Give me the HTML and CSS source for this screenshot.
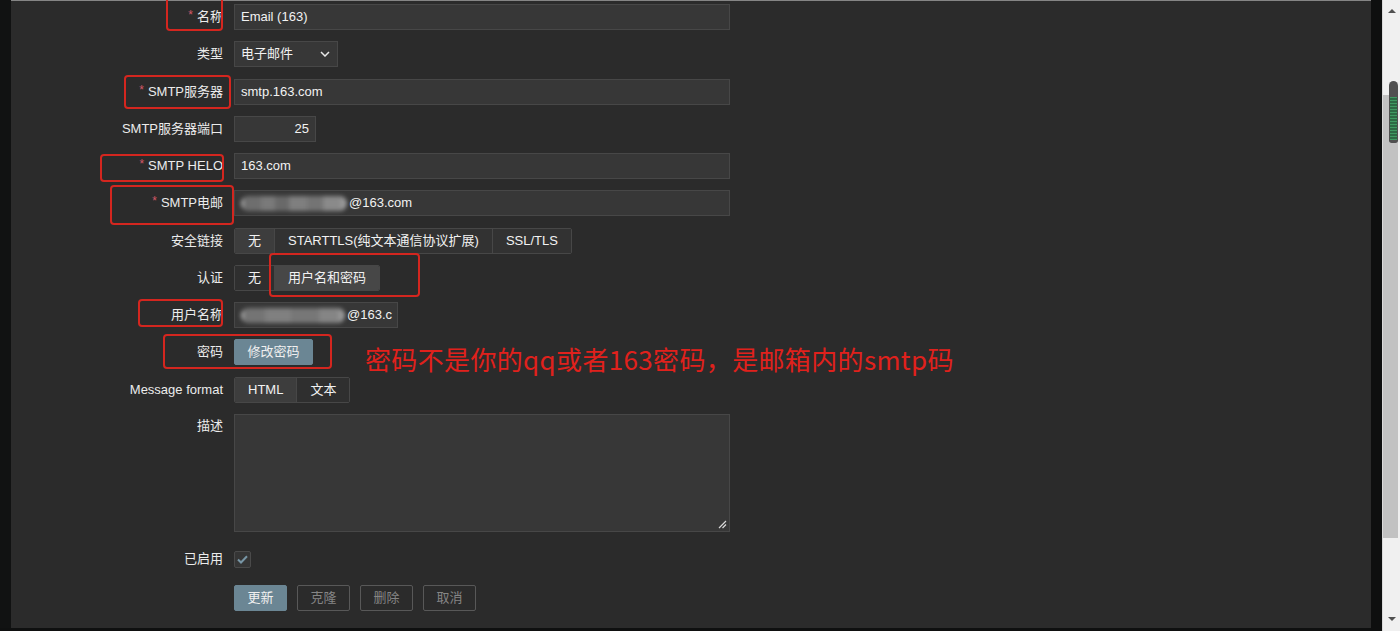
FILE: index.html
```html
<!DOCTYPE html>
<html lang="zh">
<head>
<meta charset="utf-8">
<title>媒体类型 - Email (163)</title>
<link rel="stylesheet" href="styles.css">
</head>
<body>
<div class="screen">
  <div class="edge-left"></div>
  <main class="panel">
    <form class="form">
      <div class="row">
        <label class="lbl"><span class="ast">*</span>名称</label>
        <div class="field"><div class="input w-wide">Email (163)</div></div>
      </div>
      <div class="row">
        <label class="lbl">类型</label>
        <div class="field">
          <div class="input select">
            <span>电子邮件</span>
            <svg class="chev" width="10" height="6" viewBox="0 0 10 6"><polyline points="1,1 5,5 9,1" fill="none" stroke="#e8e8e8" stroke-width="1.5"/></svg>
          </div>
        </div>
      </div>
      <div class="row">
        <label class="lbl"><span class="ast">*</span>SMTP服务器</label>
        <div class="field"><div class="input w-wide">smtp.163.com</div></div>
      </div>
      <div class="row">
        <label class="lbl">SMTP服务器端口</label>
        <div class="field"><div class="input port">25</div></div>
      </div>
      <div class="row">
        <label class="lbl"><span class="ast">*</span>SMTP HELO</label>
        <div class="field"><div class="input w-wide">163.com</div></div>
      </div>
      <div class="row">
        <label class="lbl"><span class="ast">*</span>SMTP电邮</label>
        <div class="field"><div class="input w-wide"><span class="blur b1"></span><span class="mail">@163.com</span></div></div>
      </div>
      <div class="row">
        <label class="lbl">安全链接</label>
        <div class="field">
          <div class="seg">
            <span class="opt on-soft">无</span>
            <span class="opt">STARTTLS(纯文本通信协议扩展)</span>
            <span class="opt">SSL/TLS</span>
          </div>
        </div>
      </div>
      <div class="row">
        <label class="lbl">认证</label>
        <div class="field">
          <div class="seg">
            <span class="opt off">无</span>
            <span class="opt on">用户名和密码</span>
          </div>
        </div>
      </div>
      <div class="row">
        <label class="lbl">用户名称</label>
        <div class="field"><div class="input user"><span class="blur b2"></span><span class="mail">@163.c</span></div></div>
      </div>
      <div class="row">
        <label class="lbl">密码</label>
        <div class="field"><button type="button" class="btn primary pw">修改密码</button></div>
      </div>
      <div class="row">
        <label class="lbl">Message format</label>
        <div class="field">
          <div class="seg">
            <span class="opt on-soft">HTML</span>
            <span class="opt off">文本</span>
          </div>
        </div>
      </div>
      <div class="row tall">
        <label class="lbl top">描述</label>
        <div class="field">
          <div class="textarea">
            <svg class="grip" width="9" height="9" viewBox="0 0 9 9"><path d="M8 1 L1 8 M8 4.5 L4.5 8" stroke="#d8d8d8" stroke-width="1.2" fill="none"/></svg>
          </div>
        </div>
      </div>
      <div class="row enabled">
        <label class="lbl">已启用</label>
        <div class="field">
          <span class="check"><svg width="11" height="9" viewBox="0 0 11 9"><path d="M1 4.5 L4 7.5 L10 1.2" fill="none" stroke="#7896a6" stroke-width="2"/></svg></span>
        </div>
      </div>
      <div class="row actions">
        <span></span>
        <div class="field btns">
          <button type="button" class="btn primary">更新</button>
          <button type="button" class="btn alt">克隆</button>
          <button type="button" class="btn alt">删除</button>
          <button type="button" class="btn alt">取消</button>
        </div>
      </div>
    </form>
  </main>
  <div class="edge-right"></div>
  <div class="scrollbar">
    <span class="arrow up"></span>
    <div class="track"></div>
    <span class="arrow down"></span>
    <div class="thumb"><div class="stripes"></div></div>
  </div>

  <div class="marks">
    <div class="mark m1"></div>
    <div class="mark m2"></div>
    <div class="mark m3"></div>
    <div class="mark m4"></div>
    <div class="mark m5"></div>
    <div class="mark m6"></div>
    <div class="mark m7"></div>
    <div class="note">密码不是你的qq或者163密码，是邮箱内的smtp码</div>
  </div>
</div>
</body>
</html>
```

FILE: styles.css
```css
* { box-sizing: border-box; }

html, body {
  margin: 0;
  padding: 0;
  overflow: hidden;
  background: #0f1010;
}

.screen {
  position: relative;
  display: flex;
  align-items: flex-start;
  width: 1400px;
  height: 631px;
  background: #0f1010;
  font-family: "Liberation Sans", "Noto Sans CJK SC", Arial, sans-serif;
  font-size: 13px;
  color: #f2f2f2;
}

.edge-left { width: 11px; height: 628px; background: #111212; flex: none; }
.edge-right { width: 11px; height: 631px; background: #0e0f0f; flex: none; }

.panel {
  width: 1360px;
  height: 628px;
  flex: none;
  background: #2b2b2b;
  border-top: 1px solid #858585;
}

.form {
  display: flex;
  flex-direction: column;
  gap: 11.27px;
  padding-top: 3px;
}

.row {
  display: grid;
  grid-template-columns: 212px 1fr;
  column-gap: 11px;
  height: 26px;
  align-items: center;
}

.row.tall { height: 118px; align-items: start; }
.row.enabled { margin-top: 3.3px; }
.row.actions { margin-top: 1px; }

.lbl {
  text-align: right;
  line-height: 26px;
  color: #ececec;
  white-space: nowrap;
}
.lbl.top { line-height: 24px; }

.ast {
  color: #d25867;
  margin-right: 4px;
  font-size: 12px;
  position: relative;
  top: -2px;
}

.field { display: flex; align-items: center; }

.input {
  height: 26px;
  line-height: 24px;
  background: #373737;
  border: 1px solid #474747;
  padding: 0 6px;
  color: #f2f2f2;
  white-space: nowrap;
  overflow: hidden;
  display: flex;
  align-items: center;
}
.w-wide { width: 496px; }
.select { width: 104px; justify-content: space-between; padding: 0 7px 0 6px; }
.chev { flex: none; }
.port { width: 82px; justify-content: flex-end; padding-right: 6px; }
.user { width: 164px; padding: 0 1px 0 6px; }

.blur {
  display: inline-block;
  height: 15px;
  border-radius: 8px;
  filter: blur(2px);
  flex: none;
}
.b1 {
  width: 106px;
  margin-right: 2px;
  background: linear-gradient(90deg, #bdbdbd 0 2px, #6e6e6e 3px 20px, #7a7a7a 20px 34px, #696969 34px 48px, #7f7f7f 48px 66px, #747474 66px 82px, #8a8a8a 82px 100px, #9a9a9a 100px);
}
.b2 {
  width: 104px;
  margin-right: 2px;
  background: linear-gradient(90deg, #bdbdbd 0 2px, #747474 3px 24px, #808080 24px 50px, #777777 50px 78px, #858585 78px 98px, #9a9a9a 98px);
}
.mail { flex: none; }

.seg {
  display: inline-flex;
  height: 26px;
  border: 1px solid #474747;
  border-radius: 2px;
  overflow: hidden;
}
.opt {
  padding: 0 13px;
  line-height: 24px;
  background: #323232;
  color: #f2f2f2;
  white-space: nowrap;
}
.opt + .opt { border-left: 1px solid #474747; }
.opt.off { background: #2f2f2f; }
.opt.on-soft { background: #3d3d3d; }
.opt.on { background: #474747; }

.textarea {
  position: relative;
  width: 496px;
  height: 118px;
  background: #373737;
  border: 1px solid #474747;
}
.grip { position: absolute; right: 2px; bottom: 2px; }

.check {
  width: 17px;
  height: 17px;
  background: #353535;
  border: 1px solid #4a4a4a;
  border-radius: 2px;
  display: flex;
  align-items: center;
  justify-content: center;
}

.btns { gap: 10px; }

.btn {
  height: 26px;
  width: 53px;
  padding: 0;
  font-family: inherit;
  font-size: 13px;
  border-radius: 2px;
  border: 1px solid transparent;
  line-height: 24px;
}
.btn.primary { background: #6b8694; color: #f0f0f0; border-color: #6b8694; }
.btn.pw { width: 79px; }
.btn.alt { background: #2b2b2b; border-color: #585858; color: #858585; }

/* fake browser scrollbar */
.scrollbar {
  position: relative;
  width: 18px;
  height: 631px;
  flex: none;
  background: #f0f0f0;
  border-left: 1px solid #dadada;
  display: flex;
  flex-direction: column;
  align-items: center;
}
.arrow {
  width: 0;
  height: 0;
  border-left: 4px solid transparent;
  border-right: 4px solid transparent;
}
.arrow.up { margin-top: 9px; border-bottom: 4px solid #505050; }
.arrow.down { margin-top: 79px; border-top: 4px solid #505050; }
.track {
  margin-top: 82px;
  width: 15px;
  height: 443px;
  background: #c2c2c2;
  align-self: flex-start;
}
.thumb {
  position: absolute;
  left: 6px;
  top: 81px;
  width: 9px;
  height: 62px;
  border-radius: 5px 5px 3px 3px;
  background: #505050;
  padding: 16px 1px 3px;
}
.stripes {
  height: 100%;
  background: repeating-linear-gradient(180deg, #3f9a62 0 1px, #2c6a44 1px 3px);
}

/* red hand-drawn annotations over the screenshot */
.marks { position: absolute; inset: 0; pointer-events: none; }
.mark {
  position: absolute;
  border: 2px solid #d4261f;
  border-radius: 4px;
}
.m1 { left: 166px; top: -3px; width: 57px; height: 34px; }
.m2 { left: 124px; top: 75px; width: 107px; height: 34px; }
.m3 { left: 100px; top: 154px; width: 124px; height: 28px; }
.m4 { left: 110px; top: 185px; width: 124px; height: 40px; }
.m5 { left: 269px; top: 253px; width: 151px; height: 44px; }
.m6 { left: 138px; top: 299px; width: 85px; height: 28px; }
.m7 { left: 163px; top: 334px; width: 169px; height: 35px; }

.note {
  position: absolute;
  left: 365px;
  top: 346px;
  font-family: "Noto Sans CJK SC", sans-serif;
  font-size: 26px;
  line-height: 26px;
  letter-spacing: 0.35px;
  color: #e0211c;
  white-space: nowrap;
}
```
